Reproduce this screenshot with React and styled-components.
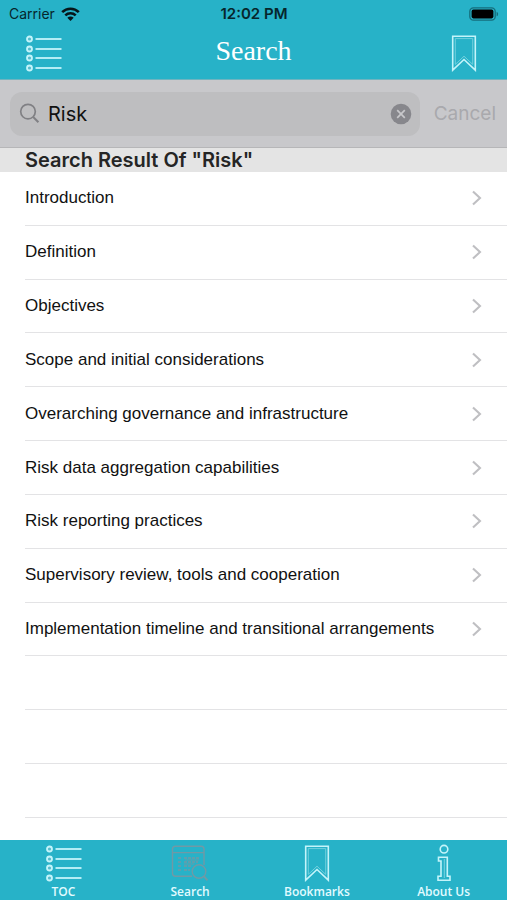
import React, { useState } from "react";
import styled, { createGlobalStyle } from "styled-components";

const GlobalStyle = createGlobalStyle`
  *, *::before, *::after { box-sizing: border-box; }
  body { margin: 0; background: #fff; }
  button, input { font: inherit; color: inherit; border: 0; padding: 0; margin: 0; background: none; }
  button { cursor: pointer; }
  svg { display: block; flex: none; }
`;

const teal = "#27b2c8";
const pale = "#c4f4fa";

const Screen = styled.div`
  min-height: 100vh;
  display: flex;
  flex-direction: column;
  font-family: Inter, "Liberation Sans", sans-serif;
  color: #111;
`;

const Header = styled.header`
  background: ${teal};
  border-bottom: 1px solid #6fb4c0;
`;

const StatusBar = styled.div`
  height: 27px;
  padding: 0 8px 0 9px;
  display: grid;
  grid-template-columns: 1fr auto 1fr;
  align-items: center;
  font-size: 14px;
  line-height: 20px;
  color: #06262c;
`;

const Carrier = styled.span`
  display: flex;
  align-items: center;
  gap: 6px;
`;

const Time = styled.time`
  font-size: 15px;
  font-weight: 600;
`;

const BatterySlot = styled.span`
  justify-self: end;
`;

const NavBar = styled.nav`
  height: 52px;
  padding: 0 21px;
  display: grid;
  grid-template-columns: 1fr auto 1fr;
  align-items: center;
`;

const NavButton = styled.button`
  width: 44px;
  height: 44px;
  display: flex;
  align-items: center;
  justify-content: center;
  justify-self: ${({ $side }) => $side};
`;

const Title = styled.h1`
  margin: 0;
  padding-bottom: 4px;
  font-family: "Liberation Serif", serif;
  font-size: 28px;
  line-height: 32px;
  font-weight: 400;
  color: #fff;
`;

const SearchForm = styled.form`
  height: 68px;
  padding: 0 11px 0 10px;
  display: flex;
  align-items: center;
  gap: 14px;
  background: #c8c8cb;
  border-bottom: 1px solid #b6b6b8;
`;

const Field = styled.label`
  flex: 1;
  min-width: 0;
  height: 44px;
  padding: 0 8px 0 9px;
  display: flex;
  align-items: center;
  gap: 8px;
  border-radius: 12px;
  background: #bebec0;
`;

const FieldInput = styled.input`
  flex: 1;
  min-width: 0;
  font-size: 20px;
  line-height: 26px;
  outline: none;
`;

const CancelButton = styled.button`
  font-size: 19px;
  line-height: 26px;
  color: #a9a9ad;
`;

const SectionTitle = styled.h2`
  margin: 0;
  padding-left: 25px;
  font-size: 20px;
  line-height: 24px;
  font-weight: 600;
  color: #252525;
  background: #e4e4e4;
`;

const Results = styled.ul`
  flex: 1;
  margin: 0;
  padding: 0 0 22px 25px;
  display: flex;
  flex-direction: column;
  list-style: none;
`;

const Row = styled.li`
  flex: 1 0 0px;
  min-height: 44px;
  display: flex;
  border-bottom: 1px solid #e3e3e5;
`;

const RowLink = styled.a`
  flex: 1;
  padding-right: 25px;
  display: flex;
  align-items: center;
  justify-content: space-between;
  font-family: "Liberation Sans", Arial, sans-serif;
  font-size: 17px;
  line-height: 20px;
  color: #111;
  text-decoration: none;
`;

const TabBar = styled.nav`
  height: 60px;
  display: grid;
  grid-template-columns: repeat(4, 1fr);
  background: ${teal};
`;

const Tab = styled.button`
  display: flex;
  flex-direction: column;
  align-items: center;
  justify-content: flex-end;
  gap: 1px;
  font-family: "Open Sans", sans-serif;
  font-size: 12px;
  line-height: 17px;
  font-weight: 600;
  color: #e2fbff;
`;

const WifiIcon = () => (
  <svg width="19" height="14" viewBox="0 0 19 14" aria-hidden="true">
    <g fill="none" stroke="#06161a" strokeWidth="2.6">
      <path d="M1.2 5.2C5.8.6 13.2.6 17.8 5.2" />
      <path d="M4.3 8.4c2.9-2.8 7.5-2.8 10.4 0" />
    </g>
    <path d="M9.5 14 6.3 10.8c1.8-1.6 4.6-1.6 6.4 0z" fill="#06161a" />
  </svg>
);

const BatteryIcon = () => (
  <svg width="30" height="14" viewBox="0 0 30 14" aria-hidden="true">
    <rect x=".8" y=".8" width="25.4" height="12.4" rx="3.6" fill="none" stroke="#166e7c" strokeWidth="1.3" />
    <rect x="2.6" y="2.6" width="21.8" height="8.8" rx="1.8" fill="#000" />
    <path d="M27.6 4.7c2 .8 2 3.8 0 4.6z" fill="#166e7c" />
  </svg>
);

const ListIcon = () => (
  <svg width="38" height="37" viewBox="0 0 38 37" aria-hidden="true">
    {[4, 14, 23, 33].map((y) => (
      <g key={y} stroke={pale} fill="none">
        <circle cx="5.5" cy={y} r="2.5" strokeWidth="1.8" fill="#58bdcd" />
        <path d={`M11.5 ${y}H37.5`} strokeWidth="1.8" />
      </g>
    ))}
  </svg>
);

const BookmarkIcon = () => (
  <svg width="26" height="37" viewBox="0 0 26 37" fill="none" aria-hidden="true">
    <path d="M1.7 1.2H24.3V35.2L13 24.5 1.7 35.2z" stroke={pale} strokeWidth="1.6" />
    <path d="M4.3 3.6H21.7V29.4L13 21.2 4.3 29.4z" stroke="#79d3e0" strokeWidth=".9" />
  </svg>
);

const SearchPageIcon = () => (
  <svg width="38" height="37" viewBox="0 0 38 37" fill="none" stroke="#7199a5" strokeWidth="1.4" aria-hidden="true">
    <path d="M21 31.2H4.5Q1.5 31.2 1.5 28.2V4Q1.5 1.2 4.5 1.2H30Q33 1.2 33 4V20M1.5 7.6H33" />
    <path d="M7 13h3M13 13h16M7 17h3M13 17h14M7 21h3M13 21h8M7 25h3M13 25h6" strokeDasharray="3 1" />
    <path d="M14 15h14M13 19h10" strokeWidth=".8" />
    <circle cx="28" cy="26.5" r="6.8" fill={teal} />
    <path d="m33 31.3 3.5 4" strokeWidth="2" />
  </svg>
);

const InfoIcon = () => (
  <svg width="16" height="38" viewBox="0 0 16 38" fill="none" stroke={pale} strokeWidth="1.6" aria-hidden="true">
    <circle cx="8" cy="5.2" r="3.8" />
    <path d="M2.5 13.2H11.3V32.3H14V36.2H2V32.3H5V17H2.5z" />
    <path d="M8.3 15V34" stroke="#79d3e0" strokeWidth="1" />
  </svg>
);

const MagnifierIcon = () => (
  <svg width="21" height="21" viewBox="0 0 21 21" fill="none" stroke="#808084" strokeWidth="1.7" aria-hidden="true">
    <circle cx="9" cy="8.6" r="7.3" />
    <path d="m14.2 14 5.2 5.2" strokeWidth="2" />
  </svg>
);

const ClearIcon = () => (
  <svg width="22" height="22" viewBox="0 0 22 22" aria-hidden="true">
    <circle cx="11" cy="11" r="10.3" fill="#87878c" />
    <path d="m7.2 7.2 7.6 7.6m0-7.6-7.6 7.6" stroke="#c8c8cb" strokeWidth="1.7" />
  </svg>
);

const ChevronIcon = () => (
  <svg width="11" height="16" viewBox="0 0 11 16" fill="none" aria-hidden="true">
    <path d="m2 1.4 7 6.6-7 6.6" stroke="#bfbfc2" strokeWidth="2.1" />
  </svg>
);

const topics = [
  "Introduction",
  "Definition",
  "Objectives",
  "Scope and initial considerations",
  "Overarching governance and infrastructure",
  "Risk data aggregation capabilities",
  "Risk reporting practices",
  "Supervisory review, tools and cooperation",
  "Implementation timeline and transitional arrangements",
];

const blankRows = ["a", "b", "c"];

const tabs = [
  { label: "TOC", Icon: ListIcon },
  { label: "Search", Icon: SearchPageIcon, current: true },
  { label: "Bookmarks", Icon: BookmarkIcon },
  { label: "About Us", Icon: InfoIcon },
];

export default function App() {
  const [query, setQuery] = useState("Risk");

  return (
    <Screen>
      <GlobalStyle />
      <Header>
        <StatusBar>
          <Carrier>
            Carrier
            <WifiIcon />
          </Carrier>
          <Time>12:02 PM</Time>
          <BatterySlot>
            <BatteryIcon />
          </BatterySlot>
        </StatusBar>
        <NavBar>
          <NavButton type="button" $side="start" aria-label="Table of contents">
            <ListIcon />
          </NavButton>
          <Title>Search</Title>
          <NavButton type="button" $side="end" aria-label="Bookmarks">
            <BookmarkIcon />
          </NavButton>
        </NavBar>
      </Header>
      <SearchForm role="search" onSubmit={(e) => e.preventDefault()}>
        <Field>
          <MagnifierIcon />
          <FieldInput
            type="text"
            aria-label="Search"
            value={query}
            onChange={(e) => setQuery(e.target.value)}
          />
          <button type="button" aria-label="Clear" onClick={() => setQuery("")}>
            <ClearIcon />
          </button>
        </Field>
        <CancelButton type="button">Cancel</CancelButton>
      </SearchForm>
      <SectionTitle>Search Result Of "Risk"</SectionTitle>
      <Results>
        {topics.map((topic) => (
          <Row key={topic}>
            <RowLink href="#">
              {topic}
              <ChevronIcon />
            </RowLink>
          </Row>
        ))}
        {blankRows.map((id) => (
          <Row key={id} aria-hidden="true" />
        ))}
      </Results>
      <TabBar>
        {tabs.map(({ label, Icon, current }) => (
          <Tab key={label} type="button" aria-current={current ? "page" : undefined}>
            <Icon />
            {label}
          </Tab>
        ))}
      </TabBar>
    </Screen>
  );
}
